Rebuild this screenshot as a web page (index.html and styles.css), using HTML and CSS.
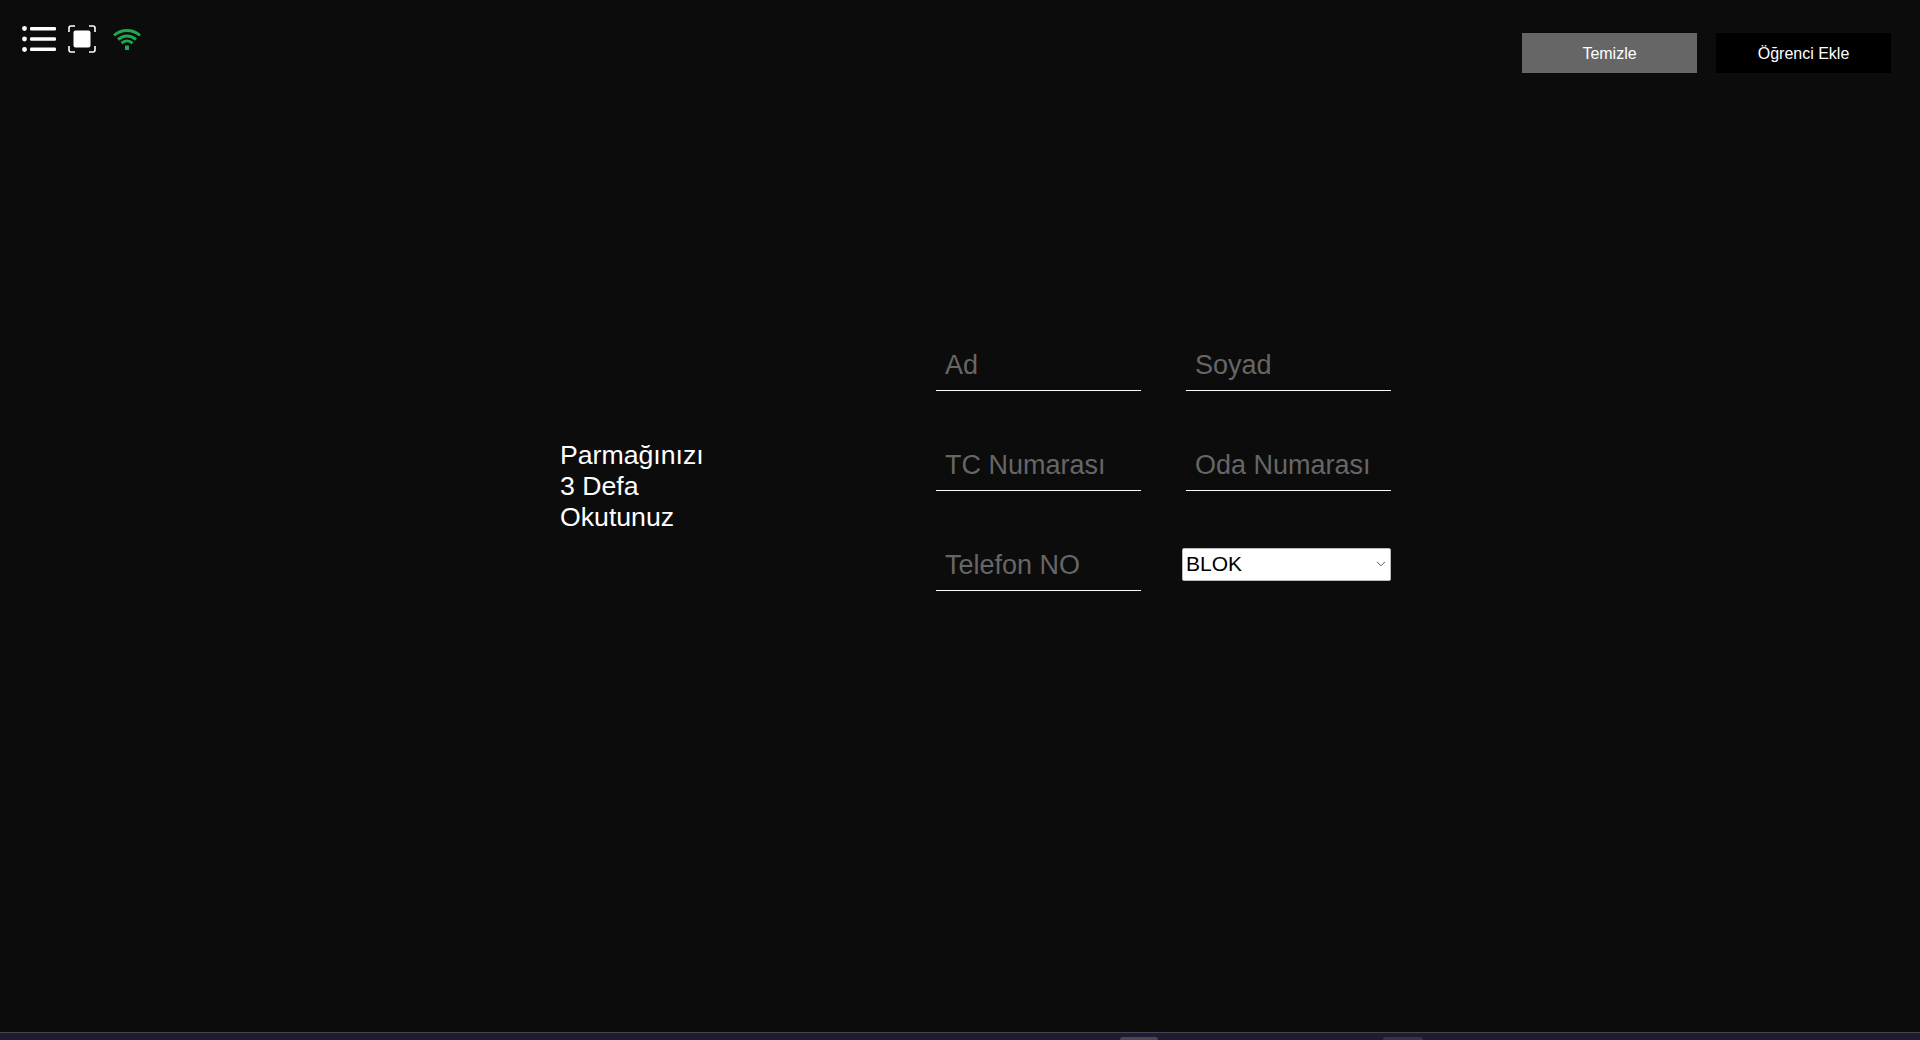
FILE: index.html
```html
<!DOCTYPE html>
<html lang="tr">
<head>
<meta charset="utf-8">
<title>Öğrenci Ekle</title>
<link rel="stylesheet" href="styles.css">
</head>
<body>
<div class="app">
  <header class="topbar">
    <div class="icons">
      <svg class="icon-list" width="36" height="28" viewBox="0 0 36 28" fill="#fff">
        <circle cx="2.5" cy="2.5" r="2.4"/><circle cx="2.5" cy="13" r="2.4"/><circle cx="2.5" cy="23.5" r="2.4"/>
        <rect x="8" y="1" width="26" height="3.4" rx="1.2"/><rect x="8" y="11.3" width="26" height="3.4" rx="1.2"/><rect x="8" y="21.6" width="26" height="3.4" rx="1.2"/>
      </svg>
      <svg class="icon-full" width="28" height="28" viewBox="0 0 28 28" fill="none" stroke="#fff" stroke-width="1.6">
        <path d="M7 1H3a2 2 0 0 0-2 2v4M21 1h4a2 2 0 0 1 2 2v4M7 27H3a2 2 0 0 1-2-2v-4M21 27h4a2 2 0 0 0 2-2v-4"/>
        <rect x="5.500" y="5.500" width="17" height="17" rx="2" fill="#fff" stroke="none"/>
      </svg>
      <svg class="icon-wifi" width="28" height="22" viewBox="0 0 28 22" fill="none" stroke="#1fa84f" stroke-width="3">
        <path d="M1 7.500C8.500 .8 19.500 .8 27 7.500"/>
        <path d="M5 11.500C10.500 6.800 17.500 6.800 23 11.500"/>
        <path d="M8.500 15.200C11.800 12.300 16.200 12.300 19.500 15.200"/>
        <path d="M14 17.500V22" stroke-width="4"/>
      </svg>
    </div>
    <div class="actions">
      <button class="btn btn-clear" type="button">Temizle</button>
      <button class="btn btn-add" type="button">Öğrenci Ekle</button>
    </div>
  </header>
  <main class="content">
    <p class="prompt">Parmağınızı<br>3 Defa<br>Okutunuz</p>
    <form class="form">
      <input class="field" type="text" placeholder="Ad">
      <input class="field" type="text" placeholder="Soyad">
      <input class="field" type="text" placeholder="TC Numarası">
      <input class="field" type="text" placeholder="Oda Numarası">
      <input class="field" type="text" placeholder="Telefon NO">
      <div class="select">
        <span>BLOK</span>
        <svg width="10" height="6" viewBox="0 0 10 6" fill="none" stroke="#555" stroke-width="1"><path d="M1 .8l4 4 4-4"/></svg>
      </div>
    </form>
  </main>
  <footer class="strip">
    <span class="tab tab-a"></span>
    <span class="tab tab-b"></span>
  </footer>
</div>
</body>
</html>
```
FILE: styles.css
```css
* { box-sizing: border-box; }
html, body { margin: 0; height: 100%; overflow: hidden; }
body { background: #0c0c0c; font-family: "Liberation Sans", Arial, sans-serif; color: #fff; }
.app { height: 1040px; display: flex; flex-direction: column; }
.topbar { height: 250px; flex: none; display: flex; justify-content: space-between; align-items: flex-start; padding: 25px 29px 0 22px; }
.icons { display: flex; align-items: flex-start; gap: 10px; }
.icon-list { margin-top: 1px; }
.icon-wifi { margin: 3px 0 0 7px; }
.actions { display: flex; gap: 19px; margin-top: 8px; }
.btn { width: 175px; height: 40px; border: 0; color: #fff; font: 16px "Liberation Sans", Arial, sans-serif; padding: 2px 0 0; }
.btn-clear { background: #666; }
.btn-add { background: #000; }
.content { flex: 1; display: flex; align-items: flex-start; padding: 81px 0 0 560px; }
.prompt { width: 376px; margin: 109px 0 0; font-size: 26.67px; line-height: 31px; }
.form { display: grid; grid-template-columns: 205px 205px; column-gap: 45px; row-gap: 40px; align-items: center; }
.field { width: 205px; height: 60px; background: transparent; border: 0; border-bottom: 1px solid #fff; padding: 9px 9px 0; color: #fff; font: 27px "Liberation Sans", Arial, sans-serif; outline: none; }
.field::placeholder { color: #666; opacity: 1; }
.select { width: 209px; height: 33px; margin: 6px 0 0 -4px; background: #fff; border: 1px solid #bbb; border-radius: 2px; color: #000; font-size: 21px; display: flex; align-items: center; justify-content: space-between; padding: 0 4px 0 3px; }
.strip { height: 8px; flex: none; background: #1e1b33; border-top: 1px solid #44444f; position: relative; }
.tab { position: absolute; bottom: 0; height: 3px; border-radius: 4px 4px 0 0; }
.tab-a { left: 1120px; width: 38px; background: #4a4654; }
.tab-b { left: 1383px; width: 40px; background: #35334a; }
```
